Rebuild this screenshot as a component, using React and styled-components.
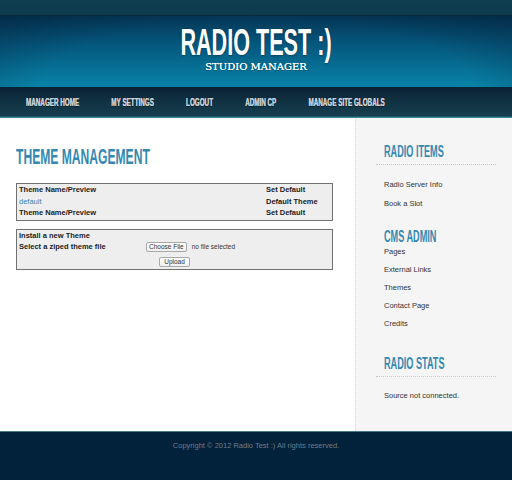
import React from 'react';
import styled, { createGlobalStyle } from 'styled-components';

const navItems = ['MANAGER HOME', 'MY SETTINGS', 'LOGOUT', 'ADMIN CP', 'MANAGE SITE GLOBALS'];

const themes = [
  { name: 'Theme Name/Preview', action: 'Set Default', head: true },
  { name: 'default', action: 'Default Theme', link: true },
  { name: 'Theme Name/Preview', action: 'Set Default', head: true },
];

const sideBlocks = [
  { title: 'RADIO ITEMS', rule: true, items: ['Radio Server Info', 'Book a Slot'], gap: 10, line: 19 },
  { title: 'CMS ADMIN', rule: false, items: ['Pages', 'External Links', 'Themes', 'Contact Page', 'Credits'], gap: -2, line: 18 },
  { title: 'RADIO STATS', rule: true, items: ['Source not connected.'], gap: 9, line: 19 },
];

const App = () => {
  return (
    <>
      <GlobalStyle />
      <Page>
        <TopStrip />
        <Header>
          <Title>
            <Condensed $scale={0.6} $origin="center">RADIO TEST :)</Condensed>
          </Title>
          <Subtitle>STUDIO MANAGER</Subtitle>
        </Header>
        <Nav>
          <NavList>
            {navItems.map((item) => (
              <NavItem key={item}>{item}</NavItem>
            ))}
          </NavList>
        </Nav>
        <Content>
          <Main>
            <PageTitle>
              <Condensed $scale={0.55}>THEME MANAGEMENT</Condensed>
            </PageTitle>
            <Box>
              {themes.map((row, i) => (
                <ThemeRow key={i}>
                  <Cell $bold={row.head} $link={row.link}>{row.name}</Cell>
                  <Cell $bold>{row.action}</Cell>
                </ThemeRow>
              ))}
            </Box>
            <Box $gap={8}>
              <FormRow>
                <Cell $bold>Install a new Theme</Cell>
              </FormRow>
              <FormRow>
                <Cell $bold>Select a ziped theme file</Cell>
                <FileField>
                  <FakeButton>Choose File</FakeButton>
                  <FileName>no file selected</FileName>
                </FileField>
              </FormRow>
              <SubmitRow>
                <FakeButton $wide>Upload</FakeButton>
              </SubmitRow>
            </Box>
          </Main>
          <Sidebar>
            {sideBlocks.map((block) => (
              <SideBlock key={block.title}>
                <SideTitle $rule={block.rule}>
                  <Condensed $scale={0.57}>{block.title}</Condensed>
                </SideTitle>
                <SideList $gap={block.gap}>
                  {block.items.map((item) => (
                    <SideItem key={item} $line={block.line}>{item}</SideItem>
                  ))}
                </SideList>
              </SideBlock>
            ))}
          </Sidebar>
        </Content>
        <Footer>Copyright © 2012 Radio Test :) All rights reserved.</Footer>
      </Page>
    </>
  );
};

export default App;

const GlobalStyle = createGlobalStyle`
  html, body {
    margin: 0;
    padding: 0;
    background: #02213a;
  }
  body {
    font-family: "Liberation Sans", Arial, sans-serif;
    color: #222;
  }
  * {
    box-sizing: border-box;
  }
`;

const Page = styled.div`
  width: 512px;
  height: 480px;
  display: flex;
  flex-direction: column;
  overflow: hidden;
`;

const Condensed = styled.span`
  display: inline-block;
  white-space: nowrap;
  transform: scaleX(${(p) => p.$scale});
  transform-origin: ${(p) => p.$origin || 'left'} center;
`;

const TopStrip = styled.div`
  height: 16px;
  background: linear-gradient(to bottom, #103f52, #0c394b);
  border-bottom: 1px solid #062a3a;
`;

const Header = styled.header`
  height: 71px;
  padding-top: 12px;
  text-align: center;
  color: #fff;
  background:
    radial-gradient(ellipse 70% 160% at 50% 100%, rgba(0, 0, 0, 0) 60%, rgba(2, 25, 45, 0.4) 100%),
    linear-gradient(to bottom, #043656 0%, #05577d 40%, #0883a8 100%);
`;

const Title = styled.h1`
  margin: 0 0 3px;
  font-size: 36px;
  line-height: 30px;
  font-weight: bold;
  text-shadow: 0 1px 2px rgba(0, 0, 0, 0.3);
`;

const Subtitle = styled.div`
  font-family: "DejaVu Serif", "Liberation Serif", serif;
  font-size: 10px;
  line-height: 12px;
  text-shadow: 0 0 0.4px #fff, 0 1px 1px rgba(0, 0, 0, 0.25);
`;

const Nav = styled.nav`
  height: 31px;
  padding-left: 26px;
  display: flex;
  align-items: center;
  background: linear-gradient(to bottom, #0a2233 0%, #123546 60%, #18404f 100%);
  border-bottom: 1px solid #3f8a98;
  box-shadow: inset 0 -1px 0 #1f5766;
`;

const NavList = styled.div`
  display: flex;
  gap: 51px;
  transform: scaleX(0.63);
  transform-origin: left center;
  white-space: nowrap;
`;

const NavItem = styled.a`
  font-size: 10px;
  font-weight: bold;
  color: #c8cfd5;
  text-shadow: 0 0 0.5px #c8cfd5, 0 1px 0 rgba(0, 0, 0, 0.5);
`;

const Content = styled.div`
  height: 313px;
  display: grid;
  grid-template-columns: 355px 1fr;
  background: #fff;
`;

const Main = styled.main`
  padding: 28px 22px 0 16px;
`;

const PageTitle = styled.h2`
  margin: 0 0 15px;
  font-size: 22px;
  line-height: 22px;
  font-weight: bold;
  color: #3588b1;
`;

const Box = styled.div`
  margin-top: ${(p) => p.$gap || 0}px;
  border: 1px solid #707070;
  background: #eeeeee;
  padding: 0 2px 1px;
`;

const ThemeRow = styled.div`
  display: grid;
  grid-template-columns: 247px 1fr;
  line-height: 11.5px;
`;

const FormRow = styled.div`
  display: grid;
  grid-template-columns: 127px 1fr;
  align-items: center;
  line-height: 11.5px;
`;

const Cell = styled.div`
  font-size: 7.5px;
  font-weight: ${(p) => (p.$bold ? 'bold' : 'normal')};
  color: ${(p) => (p.$link ? '#3a86b2' : '#1c1c1c')};
`;

const FileField = styled.div`
  display: flex;
  align-items: center;
`;

const FakeButton = styled.button`
  height: 10.5px;
  padding: 0 ${(p) => (p.$wide ? 4 : 2)}px;
  font-family: "Liberation Sans", Arial, sans-serif;
  font-size: 6.5px;
  line-height: 8px;
  color: #333;
  background: linear-gradient(to bottom, #ffffff, #f0f0f0);
  border: 1px solid #a8a8a8;
  border-radius: 2px;
`;

const FileName = styled.span`
  margin-left: 5px;
  font-size: 6.5px;
  color: #333;
`;

const SubmitRow = styled.div`
  display: flex;
  justify-content: center;
  padding: 4px 0 1px;
`;

const Sidebar = styled.aside`
  background: #f5f5f5;
  border-left: 1px dotted #d8d8d8;
  padding: 26px 15px 0 20px;
  display: flex;
  flex-direction: column;
  gap: 16px;

  & > :nth-child(3) {
    margin-top: 7px;
  }
`;

const SideBlock = styled.section`
  width: 120px;
`;

const SideTitle = styled.h3`
  margin: 0;
  padding: 0 0 ${(p) => (p.$rule ? 4 : 0)}px 8px;
  font-size: 16px;
  line-height: 16px;
  font-weight: bold;
  color: #3588b1;
  border-bottom: ${(p) => (p.$rule ? '1px dotted #c8c8c8' : 'none')};
`;

const SideList = styled.ul`
  list-style: none;
  margin: ${(p) => p.$gap}px 0 0;
  padding: 0 0 0 8px;
`;

const SideItem = styled.li`
  font-size: 7.5px;
  line-height: ${(p) => p.$line}px;
  color: #333;
`;

const Footer = styled.footer`
  flex: 1;
  border-top: 1px solid #4a7487;
  background: #02213a;
  padding-top: 8px;
  text-align: center;
  font-size: 7.5px;
  line-height: 11px;
  color: #6c7e8b;
`;
